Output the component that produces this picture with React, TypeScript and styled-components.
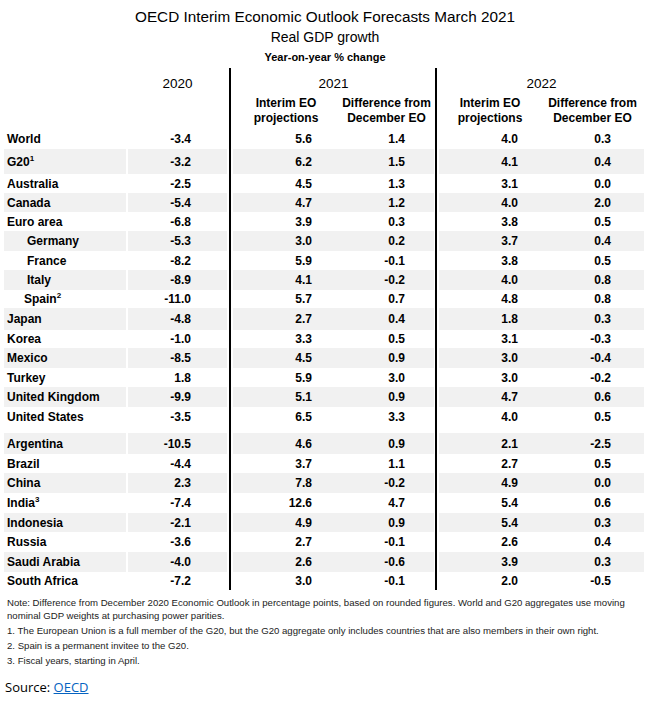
import React from 'react';
import styled, { createGlobalStyle } from 'styled-components';

const GlobalStyle = createGlobalStyle`
  html, body { margin: 0; padding: 0; background: #fff; }
  body { font-family: "Liberation Sans", Arial, sans-serif; color: #000; }
`;

const COLS = '122px 2px 99px 6px 106px 95px 5px 102px 103px';
const SHADE = '#f1f1f1';

const Page = styled.div`
  width: 650px;
  height: 702px;
  padding-left: 4px;
  box-sizing: border-box;
  overflow: hidden;
`;

const Titles = styled.header`
  width: 642px;
  display: flex;
  flex-direction: column;
  align-items: center;
  padding: 8px 0 4px;
`;

const Title = styled.h1`
  margin: 0;
  font-size: 15.3px;
  line-height: 18px;
  font-weight: normal;
`;

const Subtitle = styled.h2`
  margin: 2px 0 0;
  font-size: 14px;
  line-height: 18px;
  font-weight: normal;
`;

const Caption = styled.div`
  margin-top: 4px;
  font-size: 11px;
  line-height: 14px;
  font-weight: bold;
`;

const Table = styled.div`
  display: flex;
  flex-direction: column;
`;

const Row = styled.div<{ $h: number }>`
  display: grid;
  grid-template-columns: ${COLS};
  height: ${(p) => p.$h}px;
`;

const Gap = styled.div``;

const Rule = styled.div<{ $thin?: boolean }>`
  display: flex;
  justify-content: ${(p) => (p.$thin ? 'flex-start' : 'center')};
  padding-left: ${(p) => (p.$thin ? 1 : 0)}px;
  &::before {
    content: '';
    width: 2px;
    background: #000;
  }
`;

const YearCell = styled.div<{ $span?: number }>`
  grid-column: span ${(p) => p.$span ?? 1};
  display: flex;
  align-items: center;
  justify-content: center;
  padding-top: 2px;
  font-size: 13.5px;
`;

const SubHead = styled.div`
  text-align: center;
  font-size: 12px;
  line-height: 15px;
  font-weight: bold;
`;

const NameCell = styled.div<{ $shade: boolean; $indent: number }>`
  display: flex;
  align-items: center;
  padding-left: ${(p) => p.$indent}px;
  background: ${(p) => (p.$shade ? SHADE : 'transparent')};
  font-size: 12px;
  font-weight: bold;
  white-space: nowrap;
`;

const Label = styled.span`
  line-height: 14px;
`;

const Sup = styled.sup`
  font-size: 8px;
  line-height: 0;
  vertical-align: 5px;
`;

const NumCell = styled.div<{ $shade: boolean; $pr: number }>`
  display: flex;
  align-items: center;
  justify-content: flex-end;
  padding-right: ${(p) => p.$pr}px;
  background: ${(p) => (p.$shade ? SHADE : 'transparent')};
  font-size: 12px;
  font-weight: bold;
`;

const Notes = styled.div`
  margin-top: 6px;
  padding-left: 3px;
  font-size: 9.6px;
  line-height: 13px;
  color: #222;
`;

const NoteLine = styled.p`
  margin: 2px 0 0;
  &:first-child { margin-top: 0; }
`;

const Source = styled.div`
  margin-top: 11px;
  padding-left: 1px;
  font-family: "Open Sans", "Noto Sans", sans-serif;
  font-size: 13px;
  line-height: 18px;
`;

const SourceLink = styled.a`
  color: #0563c1;
  text-decoration: underline;
`;

type DataRow = {
  name: string;
  sup?: string;
  indent?: number;
  v: string[];
  h: number;
};

const PR = [36, 27, 29, 23, 33];

const groupA: DataRow[] = [
  { name: 'World', v: ['-3.4', '5.6', '1.4', '4.0', '0.3'], h: 20 },
  { name: 'G20', sup: '1', v: ['-3.2', '6.2', '1.5', '4.1', '0.4'], h: 25 },
  { name: 'Australia', v: ['-2.5', '4.5', '1.3', '3.1', '0.0'], h: 19 },
  { name: 'Canada', v: ['-5.4', '4.7', '1.2', '4.0', '2.0'], h: 19 },
  { name: 'Euro area', v: ['-6.8', '3.9', '0.3', '3.8', '0.5'], h: 19 },
  { name: 'Germany', indent: 23, v: ['-5.3', '3.0', '0.2', '3.7', '0.4'], h: 20 },
  { name: 'France', indent: 23, v: ['-8.2', '5.9', '-0.1', '3.8', '0.5'], h: 19 },
  { name: 'Italy', indent: 23, v: ['-8.9', '4.1', '-0.2', '4.0', '0.8'], h: 20 },
  { name: 'Spain', sup: '2', indent: 20, v: ['-11.0', '5.7', '0.7', '4.8', '0.8'], h: 18 },
  { name: 'Japan', v: ['-4.8', '2.7', '0.4', '1.8', '0.3'], h: 22 },
  { name: 'Korea', v: ['-1.0', '3.3', '0.5', '3.1', '-0.3'], h: 18 },
  { name: 'Mexico', v: ['-8.5', '4.5', '0.9', '3.0', '-0.4'], h: 20 },
  { name: 'Turkey', v: ['1.8', '5.9', '3.0', '3.0', '-0.2'], h: 19 },
  { name: 'United Kingdom', v: ['-9.9', '5.1', '0.9', '4.7', '0.6'], h: 20 },
  { name: 'United States', v: ['-3.5', '6.5', '3.3', '4.0', '0.5'], h: 19 },
];

const groupB: DataRow[] = [
  { name: 'Argentina', v: ['-10.5', '4.6', '0.9', '2.1', '-2.5'], h: 21 },
  { name: 'Brazil', v: ['-4.4', '3.7', '1.1', '2.7', '0.5'], h: 19 },
  { name: 'China', v: ['2.3', '7.8', '-0.2', '4.9', '0.0'], h: 20 },
  { name: 'India', sup: '3', v: ['-7.4', '12.6', '4.7', '5.4', '0.6'], h: 20 },
  { name: 'Indonesia', v: ['-2.1', '4.9', '0.9', '5.4', '0.3'], h: 19 },
  { name: 'Russia', v: ['-3.6', '2.7', '-0.1', '2.6', '0.4'], h: 20 },
  { name: 'Saudi Arabia', v: ['-4.0', '2.6', '-0.6', '3.9', '0.3'], h: 20 },
  { name: 'South Africa', v: ['-7.2', '3.0', '-0.1', '2.0', '-0.5'], h: 18 },
];

function DataLine({ row, shade }: { row: DataRow; shade: boolean }) {
  const [a, b, c, d, e] = row.v;
  return (
    <Row $h={row.h}>
      <NameCell $shade={shade} $indent={row.indent ?? 3}>
        <Label>
          {row.name}
          {row.sup && <Sup>{row.sup}</Sup>}
        </Label>
      </NameCell>
      <Gap />
      <NumCell $shade={shade} $pr={PR[0]}>{a}</NumCell>
      <Rule />
      <NumCell $shade={shade} $pr={PR[1]}>{b}</NumCell>
      <NumCell $shade={shade} $pr={PR[2]}>{c}</NumCell>
      <Rule $thin />
      <NumCell $shade={shade} $pr={PR[3]}>{d}</NumCell>
      <NumCell $shade={shade} $pr={PR[4]}>{e}</NumCell>
    </Row>
  );
}

export default function App() {
  return (
    <Page>
      <GlobalStyle />
      <Titles>
        <Title>OECD Interim Economic Outlook Forecasts March 2021</Title>
        <Subtitle>Real GDP growth</Subtitle>
        <Caption>Year-on-year % change</Caption>
      </Titles>
      <Table>
        <Row $h={28}>
          <Gap />
          <Gap />
          <YearCell>2020</YearCell>
          <Rule />
          <YearCell $span={2}>2021</YearCell>
          <Rule $thin />
          <YearCell $span={2}>2022</YearCell>
        </Row>
        <Row $h={33}>
          <Gap />
          <Gap />
          <Gap />
          <Rule />
          <SubHead>Interim EO<br />projections</SubHead>
          <SubHead>Difference from<br />December EO</SubHead>
          <Rule $thin />
          <SubHead>Interim EO<br />projections</SubHead>
          <SubHead>Difference from<br />December EO</SubHead>
        </Row>
        {groupA.map((r, i) => (
          <DataLine key={r.name} row={r} shade={i % 2 === 1} />
        ))}
        <Row $h={7}>
          <Gap />
          <Gap />
          <Gap />
          <Rule />
          <Gap />
          <Gap />
          <Rule $thin />
          <Gap />
          <Gap />
        </Row>
        {groupB.map((r, i) => (
          <DataLine key={r.name} row={r} shade={(groupA.length + i) % 2 === 1} />
        ))}
      </Table>
      <Notes>
        <NoteLine>
          Note: Difference from December 2020 Economic Outlook in percentage points, based on rounded figures. World and G20 aggregates use moving nominal GDP weights at purchasing power parities.
        </NoteLine>
        <NoteLine>1. The European Union is a full member of the G20, but the G20 aggregate only includes countries that are also members in their own right.</NoteLine>
        <NoteLine>2. Spain is a permanent invitee to the G20.</NoteLine>
        <NoteLine>3. Fiscal years, starting in April.</NoteLine>
      </Notes>
      <Source>
        Source: <SourceLink href="#">OECD</SourceLink>
      </Source>
    </Page>
  );
}
